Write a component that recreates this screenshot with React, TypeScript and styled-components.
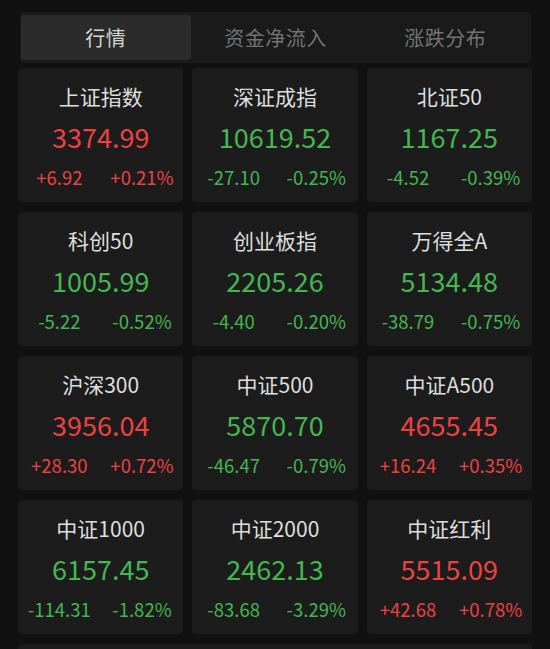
import React from 'react';
import styled, { createGlobalStyle } from 'styled-components';

type Quote = {
  name: string;
  value: string;
  change: string;
  percent: string;
};

const quotes: Quote[] = [
  { name: '上证指数', value: '3374.99', change: '+6.92', percent: '+0.21%' },
  { name: '深证成指', value: '10619.52', change: '-27.10', percent: '-0.25%' },
  { name: '北证50', value: '1167.25', change: '-4.52', percent: '-0.39%' },
  { name: '科创50', value: '1005.99', change: '-5.22', percent: '-0.52%' },
  { name: '创业板指', value: '2205.26', change: '-4.40', percent: '-0.20%' },
  { name: '万得全A', value: '5134.48', change: '-38.79', percent: '-0.75%' },
  { name: '沪深300', value: '3956.04', change: '+28.30', percent: '+0.72%' },
  { name: '中证500', value: '5870.70', change: '-46.47', percent: '-0.79%' },
  { name: '中证A500', value: '4655.45', change: '+16.24', percent: '+0.35%' },
  { name: '中证1000', value: '6157.45', change: '-114.31', percent: '-1.82%' },
  { name: '中证2000', value: '2462.13', change: '-83.68', percent: '-3.29%' },
  { name: '中证红利', value: '5515.09', change: '+42.68', percent: '+0.78%' },
];

const tabs = ['行情', '资金净流入', '涨跌分布'];

const GlobalStyle = createGlobalStyle`
  html, body {
    margin: 0;
    padding: 0;
    background: #111111;
    overflow: hidden;
  }
  body {
    font-family: "Noto Sans CJK SC", "Noto Sans", sans-serif;
  }
`;

const Page = styled.div`
  width: 550px;
  height: 649px;
  box-sizing: border-box;
  padding: 12px 18px 0 18px;
  background: #111111;
  display: flex;
  flex-direction: column;
  overflow: hidden;

  & > * {
    flex-shrink: 0;
  }
`;

const TabBar = styled.div`
  margin: 0 1px 5px 2px;
  display: grid;
  grid-template-columns: repeat(3, 1fr);
  background: #1a1a1a;
  border-radius: 4px;
  padding: 3px 1px;
  height: 51px;
  box-sizing: border-box;
`;

const Tab = styled.div<{ $active?: boolean }>`
  display: flex;
  align-items: center;
  justify-content: center;
  border-radius: 3px;
  background: ${(p) => (p.$active ? '#2b2b2b' : 'transparent')};
  color: ${(p) => (p.$active ? '#d4d4d4' : '#747474')};
  font-size: 20px;
  letter-spacing: 0.5px;
`;

const Grid = styled.div`
  display: grid;
  grid-template-columns: repeat(3, 1fr);
  column-gap: 9px;
  row-gap: 10px;
`;

const Card = styled.div`
  background: #1c1c1c;
  border-radius: 4px;
  height: 134px;
  box-sizing: border-box;
  padding-top: 14px;
  display: flex;
  flex-direction: column;
  align-items: center;
`;

const Name = styled.div`
  color: #dedede;
  font-size: 21px;
  line-height: 28px;
`;

const Value = styled.div<{ $up: boolean }>`
  margin-top: 10px;
  color: ${(p) => (p.$up ? '#ec4242' : '#43b750')};
  font-size: 27px;
  line-height: 34px;
`;

const Changes = styled.div<{ $up: boolean }>`
  margin-top: 11px;
  width: 100%;
  display: grid;
  grid-template-columns: 1fr 1fr;
  color: ${(p) => (p.$up ? '#ec4242' : '#43b750')};
  font-size: 18.5px;
  line-height: 24px;
  text-align: center;
`;

const Footer = styled.div`
  margin-top: 10px;
  height: 40px;
  background: #1c1c1c;
  border-radius: 4px;
`;

const QuoteCard = ({ name, value, change, percent }: Quote) => {
  const up = change.startsWith('+');
  return (
    <Card>
      <Name>{name}</Name>
      <Value $up={up}>{value}</Value>
      <Changes $up={up}>
        <span>{change}</span>
        <span>{percent}</span>
      </Changes>
    </Card>
  );
};

const App = () => (
  <Page>
    <GlobalStyle />
    <TabBar>
      {tabs.map((t, i) => (
        <Tab key={t} $active={i === 0}>
          {t}
        </Tab>
      ))}
    </TabBar>
    <Grid>
      {quotes.map((q) => (
        <QuoteCard key={q.name} {...q} />
      ))}
    </Grid>
    <Footer />
  </Page>
);

export default App;
